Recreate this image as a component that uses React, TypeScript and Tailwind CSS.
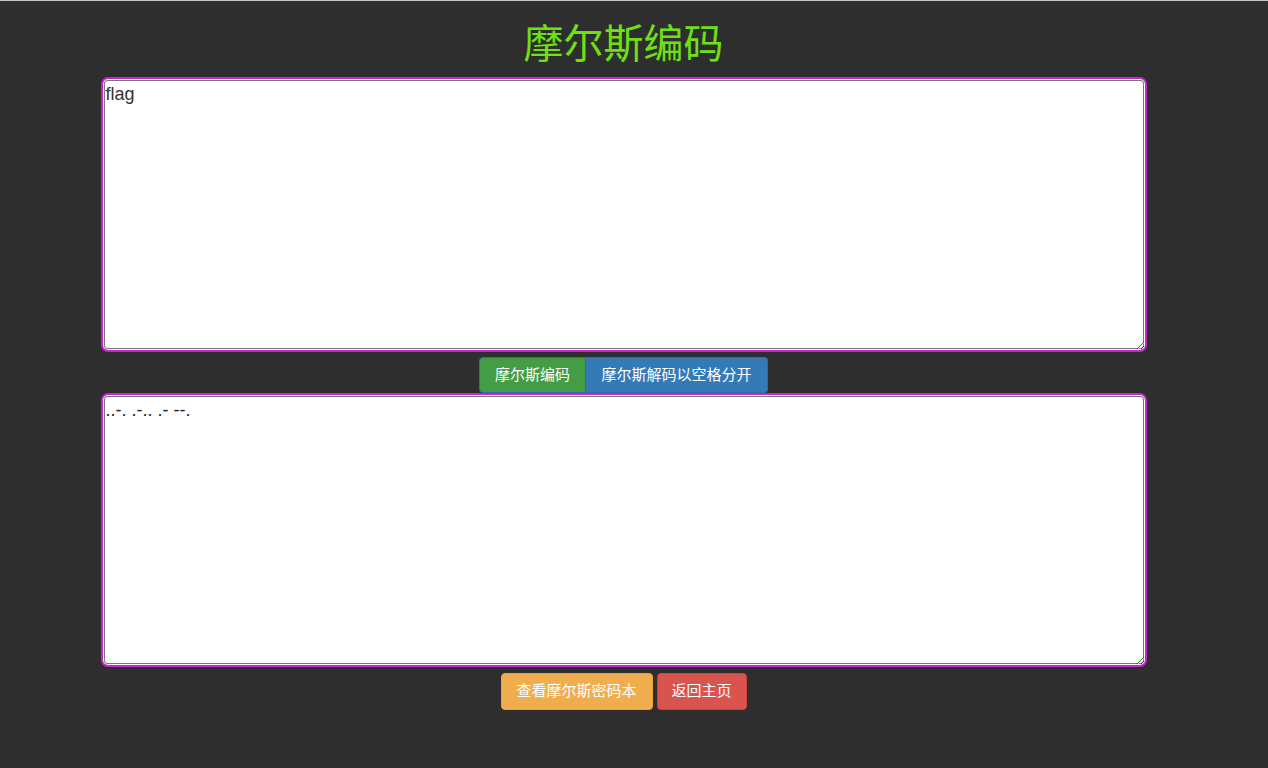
import { useState } from 'react';

const MORSE: Record<string, string> = {
  a: '.-', b: '-...', c: '-.-.', d: '-..', e: '.', f: '..-.', g: '--.', h: '....',
  i: '..', j: '.---', k: '-.-', l: '.-..', m: '--', n: '-.', o: '---', p: '.--.',
  q: '--.-', r: '.-.', s: '...', t: '-', u: '..-', v: '...-', w: '.--', x: '-..-',
  y: '-.--', z: '--..',
};

export default function App() {
  const [plain, setPlain] = useState('flag');
  const [code, setCode] = useState('..-. .-.. .- --.');

  const encode = () => {
    setCode(
      plain
        .toLowerCase()
        .split('')
        .map((c) => MORSE[c] ?? '')
        .filter(Boolean)
        .join(' ')
    );
  };

  const decode = () => {
    const rev = Object.fromEntries(Object.entries(MORSE).map(([k, v]) => [v, k]));
    setPlain(code.trim().split(/\s+/).map((m) => rev[m] ?? '').join(''));
  };

  return (
    <div
      className="min-h-[768px] bg-[#2e2e2e] border-t border-[#c8c8c8]"
      style={{ fontFamily: '"Liberation Sans", "Noto Sans CJK SC", sans-serif' }}
    >
      <div className="w-[1247px] flex flex-col items-center">
        {/* 标题 */}
        <h1 className="text-[40px] leading-[44px] text-[#6ee014] mt-[21px] mb-[11px]">摩尔斯编码</h1>

        {/* 明文 */}
        <textarea
          value={plain}
          onChange={(e) => setPlain(e.target.value)}
          className="block w-[1046px] h-[275px] bg-white text-[18px] leading-[22px] text-[#333] px-[3px] py-[4px] border-2 border-[#cc22cc] rounded-[7px] shadow-[inset_0_0_0_1px_#fff,inset_0_0_0_2px_#777] outline-none resize-y"
        />

        {/* 编码/解码 */}
        <div className="flex mt-[5px]">
          <button
            onClick={encode}
            className="w-[107px] h-[36px] text-[15px] text-white bg-[#449d44] border border-[#2e6da4] rounded-l-[4px]"
          >
            摩尔斯编码
          </button>
          <button
            onClick={decode}
            className="w-[182px] h-[36px] text-[15px] text-white bg-[#337ab7] border border-[#2e6da4] border-l-0 rounded-r-[4px]"
          >
            摩尔斯解码以空格分开
          </button>
        </div>

        {/* 摩尔斯码 */}
        <textarea
          value={code}
          onChange={(e) => setCode(e.target.value)}
          className="block w-[1046px] h-[274px] bg-white text-[18px] leading-[22px] text-[#222] px-[3px] py-[4px] border-2 border-[#cc22cc] rounded-[7px] shadow-[inset_0_0_0_1px_#fff,inset_0_0_0_2px_#777] outline-none resize-y"
        />

        <div className="flex gap-[4px] mt-[6px]">
          <button className="w-[152px] h-[37px] text-[15px] text-white bg-[#f0ad4e] border border-[#eea236] rounded-[4px]">
            查看摩尔斯密码本
          </button>
          <button className="w-[90px] h-[37px] text-[15px] text-white bg-[#d9534f] border border-[#d43f3a] rounded-[4px]">
            返回主页
          </button>
        </div>
      </div>
    </div>
  );
}
